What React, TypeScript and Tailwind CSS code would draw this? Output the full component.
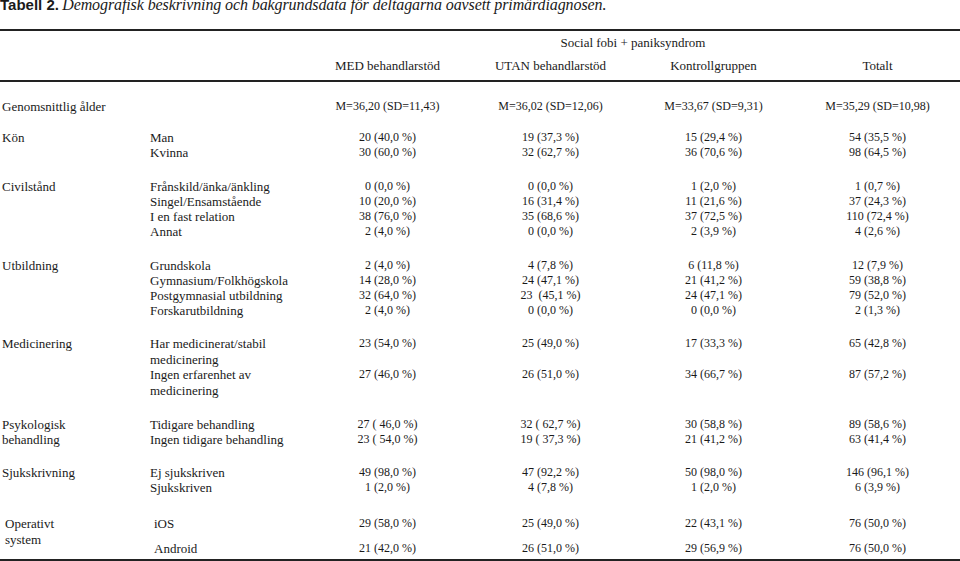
import React from "react";

type Row = { label: string; values: string[] };
type Group = { title: string; mt: string; rows: Row[]; lead?: string };

const groups: Group[] = [
  {
    title: "Kön",
    mt: "mt-[16px]",
    rows: [
      { label: "Man", values: ["20 (40,0 %)", "19 (37,3 %)", "15 (29,4 %)", "54 (35,5 %)"] },
      { label: "Kvinna", values: ["30 (60,0 %)", "32 (62,7 %)", "36 (70,6 %)", "98 (64,5 %)"] },
    ],
  },
  {
    title: "Civilstånd",
    mt: "mt-[19px]",
    rows: [
      { label: "Frånskild/änka/änkling", values: ["0 (0,0 %)", "0 (0,0 %)", "1 (2,0 %)", "1 (0,7 %)"] },
      { label: "Singel/Ensamstående", values: ["10 (20,0 %)", "16 (31,4 %)", "11 (21,6 %)", "37 (24,3 %)"] },
      { label: "I en fast relation", values: ["38 (76,0 %)", "35 (68,6 %)", "37 (72,5 %)", "110 (72,4 %)"] },
      { label: "Annat", values: ["2 (4,0 %)", "0 (0,0 %)", "2 (3,9 %)", "4 (2,6 %)"] },
    ],
  },
  {
    title: "Utbildning",
    mt: "mt-[19px]",
    rows: [
      { label: "Grundskola", values: ["2 (4,0 %)", "4 (7,8 %)", "6 (11,8 %)", "12 (7,9 %)"] },
      { label: "Gymnasium/Folkhögskola", values: ["14 (28,0 %)", "24 (47,1 %)", "21 (41,2 %)", "59 (38,8 %)"] },
      { label: "Postgymnasial utbildning", values: ["32 (64,0 %)", "23  (45,1 %)", "24 (47,1 %)", "79 (52,0 %)"] },
      { label: "Forskarutbildning", values: ["2 (4,0 %)", "0 (0,0 %)", "0 (0,0 %)", "2 (1,3 %)"] },
    ],
  },
  {
    title: "Medicinering",
    mt: "mt-[18px]",
    lead: "leading-[15.7px]",
    rows: [
      { label: "Har medicinerat/stabil medicinering", values: ["23 (54,0 %)", "25 (49,0 %)", "17 (33,3 %)", "65 (42,8 %)"] },
      { label: "Ingen erfarenhet av medicinering", values: ["27 (46,0 %)", "26 (51,0 %)", "34 (66,7 %)", "87 (57,2 %)"] },
    ],
  },
  {
    title: "Psykologisk behandling",
    mt: "mt-[18px]",
    rows: [
      { label: "Tidigare behandling", values: ["27 ( 46,0 %)", "32 ( 62,7 %)", "30 (58,8 %)", "89 (58,6 %)"] },
      { label: "Ingen tidigare behandling", values: ["23 ( 54,0 %)", "19 ( 37,3 %)", "21 (41,2 %)", "63 (41,4 %)"] },
    ],
  },
  {
    title: "Sjukskrivning",
    mt: "mt-[18px]",
    rows: [
      { label: "Ej sjukskriven", values: ["49 (98,0 %)", "47 (92,2 %)", "50 (98,0 %)", "146 (96,1 %)"] },
      { label: "Sjukskriven", values: ["1 (2,0 %)", "4 (7,8 %)", "1 (2,0 %)", "6 (3,9 %)"] },
    ],
  },
];

const os: Row[] = [
  { label: "iOS", values: ["29 (58,0 %)", "25 (49,0 %)", "22 (43,1 %)", "76 (50,0 %)"] },
  { label: "Android", values: ["21 (42,0 %)", "26 (51,0 %)", "29 (56,9 %)", "76 (50,0 %)"] },
];

const cols = "grid grid-cols-[150px_156px_163px_163px_163px_165px]";

function Values({ values }: { values: string[] }) {
  return (
    <>
      {values.map((v, i) => (
        <div key={i} className="text-center text-[12px] leading-[15px] whitespace-pre">
          {v}
        </div>
      ))}
    </>
  );
}

export default function App() {
  return (
    <div className="w-[960px] h-[561px] bg-white overflow-hidden flex flex-col text-[#1a1a1a] font-['Liberation_Serif',serif] text-[13px] leading-[15px]">
      {/* Caption */}
      <div className="h-[29px] shrink-0">
        <p className="-mt-[3px] leading-[16px] whitespace-nowrap">
          <span className="font-['Liberation_Sans',sans-serif] font-bold text-[15px]">Tabell 2.</span>{" "}
          <span className="italic text-[16px] tracking-[-0.1px]">
            Demografisk beskrivning och bakgrundsdata för deltagarna oavsett primärdiagnosen.
          </span>
        </p>
      </div>

      {/* Header */}
      <div className={`${cols} border-t-2 border-b-2 border-[#222] pt-[4px] pb-[7px] shrink-0`}>
        <div className="col-start-3 col-span-4 text-center">Social fobi + paniksyndrom</div>
        <div className="col-start-3 mt-[8px] text-center">MED behandlarstöd</div>
        <div className="mt-[8px] text-center">UTAN behandlarstöd</div>
        <div className="mt-[8px] text-center">Kontrollgruppen</div>
        <div className="mt-[8px] text-center">Totalt</div>
      </div>

      {/* Body */}
      <div className="flex-1 flex flex-col pt-[17px] border-b-2 border-[#222]">
        <div className={cols}>
          <div className="col-span-2 pl-[2px]">Genomsnittlig ålder</div>
          <Values values={["M=36,20 (SD=11,43)", "M=36,02 (SD=12,06)", "M=33,67 (SD=9,31)", "M=35,29 (SD=10,98)"]} />
        </div>

        {groups.map((g) => (
          <div key={g.title} className={`${cols} ${g.mt}`}>
            <div className="pl-[2px] w-[80px]" style={{ gridRow: `span ${g.rows.length}` }}>
              {g.title}
            </div>
            {g.rows.map((r) => (
              <React.Fragment key={r.label}>
                <div className={g.lead ?? ""}>{r.label}</div>
                <Values values={r.values} />
              </React.Fragment>
            ))}
          </div>
        ))}

        <div className={`${cols} mt-[21px]`}>
          <div className="row-span-2 pl-[5px] w-[80px] leading-[16px]">Operativt system</div>
          {os.map((r, i) => (
            <React.Fragment key={r.label}>
              <div className={`pl-[4px] ${i === 0 ? "pb-[10px]" : ""}`}>{r.label}</div>
              <Values values={r.values} />
            </React.Fragment>
          ))}
        </div>
      </div>
    </div>
  );
}
